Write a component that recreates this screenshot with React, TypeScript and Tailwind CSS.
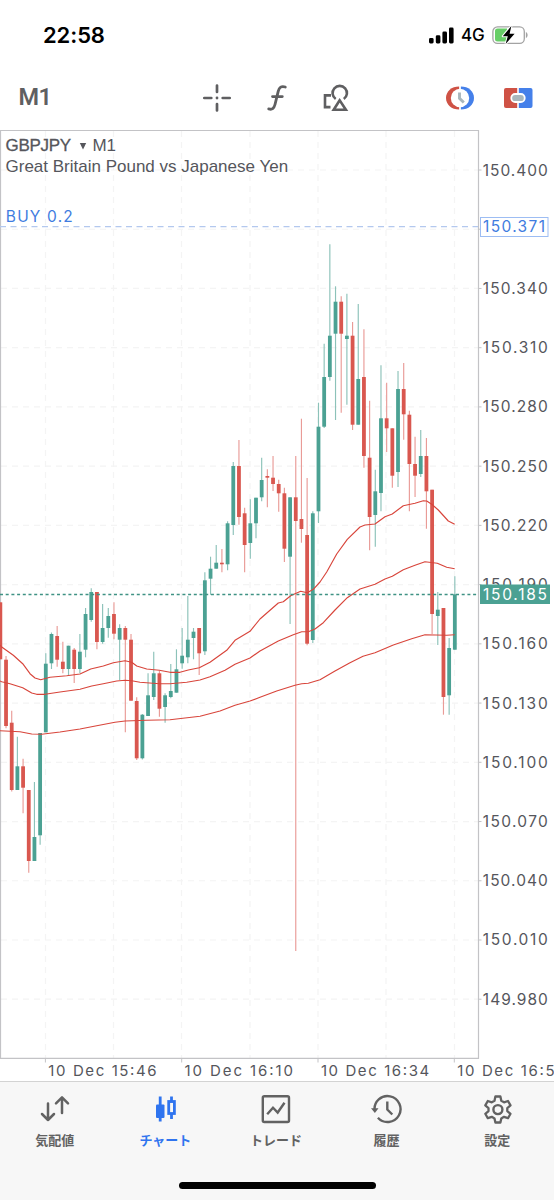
import type { ReactNode } from 'react';

// high, body top, body bottom, low (chart units), direction
type Candle = [number, number, number, number, 'u' | 'd'];

const CANDLES: Candle[] = [
  [602.3, 602.3, 659.3, 659.3, 'd'],
  [656, 659.7, 726, 728.3, 'd'],
  [710.7, 722.7, 790, 791.5, 'd'],
  [736.7, 766.3, 790, 790, 'u'],
  [758.7, 766.3, 787.7, 813.3, 'd'],
  [790, 790, 861, 872.7, 'd'],
  [782, 837, 861, 861, 'u'],
  [733, 733, 835.3, 844.7, 'u'],
  [653.3, 663.7, 732.3, 732.3, 'u'],
  [632.5, 634, 663.3, 669, 'u'],
  [626, 636, 659.7, 666.7, 'd'],
  [641.7, 661.7, 669, 673.3, 'd'],
  [645.7, 645.7, 669, 676, 'u'],
  [648, 649.7, 669, 683, 'd'],
  [634, 651.7, 669, 673.3, 'u'],
  [608, 614, 649.7, 657.3, 'u'],
  [588.3, 592, 620, 621.7, 'u'],
  [592, 592, 642, 649.3, 'd'],
  [604, 628, 642, 643.7, 'u'],
  [608, 616, 628, 637.7, 'u'],
  [602.3, 614, 633.7, 639.3, 'd'],
  [624.3, 628, 639.7, 680, 'u'],
  [626, 628, 639.7, 732.3, 'd'],
  [634, 639.7, 700.7, 700.7, 'd'],
  [697.3, 701, 758.3, 760, 'd'],
  [714, 714.7, 758.3, 759.5, 'u'],
  [673.3, 695.3, 716, 716, 'u'],
  [651.7, 673.3, 697, 700, 'u'],
  [670.7, 673.3, 708.7, 716.7, 'd'],
  [693.3, 695.3, 707, 722.7, 'u'],
  [664, 691, 697, 698.3, 'u'],
  [649.3, 669.3, 692.7, 692.7, 'u'],
  [628, 655.7, 663.3, 668.7, 'u'],
  [596, 639.7, 657.3, 663.3, 'u'],
  [628, 631.7, 638, 659.3, 'u'],
  [628, 628, 653.3, 675, 'd'],
  [572.3, 580.3, 651.3, 655, 'u'],
  [556.7, 568.7, 578.7, 594.7, 'u'],
  [545, 562.7, 568.7, 568.7, 'u'],
  [549, 562.7, 564.3, 572.3, 'd'],
  [521.3, 523.3, 564.3, 570.3, 'u'],
  [462, 466, 525, 535, 'u'],
  [440, 466, 517, 524.7, 'd'],
  [507.7, 513.3, 545, 572.3, 'd'],
  [499.3, 523.3, 543, 558.7, 'u'],
  [497.7, 497.7, 523.3, 538.3, 'u'],
  [457.7, 480, 497.3, 501.3, 'u'],
  [469.3, 476, 477.7, 507.3, 'd'],
  [456, 477.7, 484, 491, 'd'],
  [479.7, 484, 493.3, 511.7, 'd'],
  [487.7, 493.3, 548.7, 562, 'd'],
  [497.3, 497.3, 556.7, 624, 'u'],
  [456, 497.3, 521, 951, 'd'],
  [418.7, 519, 529, 542.7, 'd'],
  [478, 535, 643.7, 645.3, 'd'],
  [511.3, 513.3, 640, 643, 'u'],
  [402.7, 426.7, 511.3, 523, 'u'],
  [343.7, 377, 426.7, 428, 'u'],
  [244.3, 335.7, 377, 380.7, 'u'],
  [286.3, 301.7, 333.7, 420, 'u'],
  [296.3, 301.7, 333.7, 412.7, 'd'],
  [293.7, 335.7, 339, 404.7, 'u'],
  [322, 335.7, 424.7, 430, 'd'],
  [304, 379, 424.7, 424.7, 'u'],
  [329.3, 377, 456, 467.7, 'd'],
  [400.7, 457.7, 517, 550.3, 'd'],
  [469.7, 491.3, 515, 546.7, 'u'],
  [365.3, 418.3, 493, 511.3, 'u'],
  [382.7, 418.3, 428.3, 452, 'd'],
  [428.3, 428.3, 475.7, 487.7, 'd'],
  [371, 389, 472, 487, 'u'],
  [363, 389, 414.3, 439.7, 'd'],
  [410.7, 414.7, 464, 511.3, 'd'],
  [436.7, 464, 475.7, 497, 'd'],
  [430, 456, 474, 477, 'u'],
  [438, 456, 491.3, 528.7, 'd'],
  [489.7, 489.7, 614, 634, 'd'],
  [592, 609.7, 616, 645, 'u'],
  [608, 608, 697, 714.7, 'd'],
  [638, 648, 695.3, 714.7, 'u'],
  [576.3, 594.3, 649.7, 649.7, 'u'],
];

const AVERAGES = [
  '0,645 1.7,647 13.3,655.3 22.7,663.7 30,673.7 35,678 40.7,679.7 50,677.3 66.7,675.7 80,674 90.7,669 103.3,666 113.3,662.7 125,660.7 131.7,662.3 136.7,666 146.7,669 159.3,670.3 170,672.3 180,672.3 188.3,670 199.3,667.7 210,662.3 226.7,650.3 235,640.3 250,631.3 260,619 278.3,603 283.3,601.7 290.7,595.7 295,593.7 300.7,591.3 307.3,592.7 313.3,589.3 320,582 326.7,572 336.7,554 347.3,539.3 360,527 365,525 375,524 385,516.7 392.3,514 403.3,505.7 415,503.3 423.3,500.7 426.7,501 431.7,504.3 438.3,510 448.3,521 454.7,524.3',
  '0,681 1.7,681.7 10,683.7 22.7,687.7 31.7,693 36.7,694.3 45,694.3 60,692 80,689.3 91.7,686 103.3,683.7 116.7,681 125,680.3 131.7,680.7 140,682.3 159.3,683.7 170,683.7 186.7,682.3 200,680 210,676.7 225,670.3 235,664.3 250,658 260,651 278.3,641 293.3,634.7 301.7,631.7 308.3,631.7 315,629 323.3,622.7 335,610 347.3,597.7 360,589 364,587.7 375,584.3 385,579 392.3,576.3 403.3,569.7 415,565.3 425,561.7 437.3,563.3 446.7,567.3 454.7,568.7',
  '0,730.7 20,731.7 31.7,734 41.7,734.3 60,732 80,729 96.7,725.7 115,722.3 125,721 146.7,720.3 170,719.7 200,716.3 220,711 235,705.3 250,701 260,697.3 276.7,691 295,685.3 301.7,683.7 308.3,683.3 320,679.7 335,671 350,662.7 363,656.3 375,652.7 393.3,645 411.7,638.7 425,634.7 446.7,635.3 454.7,634.7',
];

const PRICES = [
  '150.400', '150.370', '150.340', '150.310', '150.280', '150.250', '150.220', '150.190',
  '150.160', '150.130', '150.100', '150.070', '150.040', '150.010', '149.980',
];

const TIMES = ['10 Dec 15:46', '10 Dec 16:10', '10 Dec 16:34', '10 Dec 16:58'];

const GRID_X = [45.5, 113.5, 181.5, 250, 318, 386, 454.5];

const priceY = (i: number) => 170 + i * 59.23;

function Chart() {
  return (
    <svg
      width="554"
      height="951"
      viewBox="0 130 554 951"
      className="block font-[Inter,'Noto_Sans',sans-serif]"
    >
      <g stroke="#f4f4f4" strokeWidth="1.2" strokeDasharray="6 5">
        {GRID_X.map((x) => (
          <line key={x} x1={x} x2={x} y1="131" y2="1058" />
        ))}
        {PRICES.map((p, i) => (
          <line key={p} x1="1" x2="478" y1={priceY(i)} y2={priceY(i)} />
        ))}
      </g>

      {/* frame and ticks */}
      <path d="M0.5 1058V130.3H478.5V1058.3H0" fill="none" stroke="#c3c3c6" strokeWidth="1.2" />
      <g stroke="#c3c3c6">
        {PRICES.map((p, i) => (
          <line key={p} x1="478" x2="481.5" y1={priceY(i)} y2={priceY(i)} />
        ))}
        {TIMES.map((t, i) => (
          <line key={t} x1={45.4 + i * 136.3} x2={45.4 + i * 136.3} y1="1058" y2="1062.5" />
        ))}
      </g>

      {/* open position */}
      <line x1="0" x2="478" y1="226.7" y2="226.7" stroke="#b3c8ee" strokeWidth="1.2" strokeDasharray="6 4.5" />
      <text x="5.8" y="222.4" fontSize="15.5" textLength="67" fill="#3f7ce0">BUY 0.2</text>

      {CANDLES.map(([high, top, bottom, low, dir], i) => {
        const x = 0.35 + i * 5.681;
        const up = dir === 'u';
        return (
          <g key={i}>
            <line x1={x} x2={x} y1={high} y2={low} stroke={up ? '#8cc2b9' : '#e99b97'} strokeWidth="1.15" />
            <rect x={x - 1.9} y={top} width="3.8" height={bottom - top} fill={up ? '#4ba193' : '#d9574f'} />
          </g>
        );
      })}

      {AVERAGES.map((points) => (
        <polyline key={points} points={points} fill="none" stroke="#d8453b" strokeWidth="1.15" strokeLinejoin="round" />
      ))}

      {/* bid line */}
      <line x1="0" x2="478" y1="594.4" y2="594.4" stroke="#3f9284" strokeWidth="1.5" strokeDasharray="3 2.7" />

      <g fontSize="15.5" fill="#55565c">
        {PRICES.map((p, i) =>
          p === '150.370' ? null : (
            <text key={p} x="482.8" y={priceY(i) + 5.5} textLength="65">
              {p}
            </text>
          ),
        )}
        {TIMES.map((t, i) => (
          <text key={t} x={48.3 + i * 136.3} y="1075.7" fontSize="15" textLength="108.3">
            {t}
          </text>
        ))}
      </g>

      <rect x="480.5" y="217.5" width="67.5" height="19" fill="#fff" stroke="#9dbdf3" />
      <text x="483" y="232.3" fontSize="15.5" textLength="62" fill="#3f7ce0">150.371</text>
      <rect x="480" y="584.5" width="70" height="19.5" fill="#4ba193" />
      <text x="483" y="599.8" fontSize="15.5" textLength="64" fill="#fff">150.185</text>
    </svg>
  );
}

function StatusBar() {
  return (
    <div className="flex h-[70px] items-center pl-[43px] pr-[26px] font-[Inter,sans-serif] text-black">
      <span className="text-[22px] font-semibold leading-none tracking-[-0.1px]">22:58</span>
      <svg width="25" height="17" viewBox="0 0 25 17" className="ml-auto">
        <rect x="0" y="11" width="4.6" height="5.5" rx="1.4" />
        <rect x="6.8" y="8.300" width="4.6" height="8.2" rx="1.4" />
        <rect x="13.4" y="4.600" width="4.6" height="11.9" rx="1.4" />
        <rect x="20" y="0.500" width="4.6" height="16" rx="1.4" />
      </svg>
      <span className="ml-[7px] w-[25px] text-[17px] font-medium leading-none tracking-[-0.2px]">4G</span>
      <svg width="36" height="20" viewBox="0 0 36 20" className="ml-[6px]">
        <rect x="0.9" y="1.9" width="31.4" height="16.4" rx="4.6" fill="#fff" stroke="#a3a3a3" strokeWidth="1.3" />
        <path d="M5.500 3.500H15v13H5.500a2.500 2.500 0 0 1-2.500-2.500V6a2.500 2.500 0 0 1 2.500-2.500z" fill="#67ce67" />
        <path d="M33.900 7v6.200c2.300-1 2.300-5.200 0-6.200z" fill="#a3a3a3" />
        <path
          d="M19.400 1 10.800 11.200h5L13.600 19l9-10.300h-5z"
          stroke="#fff"
          strokeWidth="2"
          paintOrder="stroke"
          strokeLinejoin="round"
        />
      </svg>
    </div>
  );
}

function Toolbar() {
  return (
    <div className="flex h-[60px] items-center pb-1 pl-[18.500px] pr-[20px] text-[#5f5f61]">
      <span className="w-[182.500px] font-[Roboto,sans-serif] text-[23.500px] font-semibold leading-none tracking-[-0.600px]">
        M1
      </span>
      <svg width="32" height="32" viewBox="0 0 32 32" fill="none" stroke="currentColor" strokeWidth="2.7" strokeLinecap="round">
        <path d="M16 3.500v6.500M16 22v6.500M3.300 16h7M21.700 16h7" />
        <circle cx="16" cy="16" r="1.4" fill="currentColor" stroke="none" />
      </svg>
      <svg width="32" height="32" viewBox="0 0 32 32" fill="none" stroke="currentColor" strokeWidth="2.800" strokeLinecap="round" className="ml-[27.500px]">
        <path d="M24.300 5c-3.900-1.200-6.100.2-7.100 4.300L14 22.500c-1.100 4.200-2.900 5.500-6.300 4.400M11.500 14.600h9.800" />
      </svg>
      <svg width="32" height="32" viewBox="0 0 32 32" fill="none" stroke="currentColor" strokeWidth="2.600" className="ml-[27px]">
        <path d="M11 13.400H5V25.100h5.500" />
        <path d="M15.700 17a7.200 7.200 0 1 1 8.100 0" />
        <path d="M19.700 18.300 13.700 27.700h12.200z" />
      </svg>
      <svg width="32" height="32" viewBox="0 0 32 32" className="ml-auto">
        <path d="M15.100 4.500C7.500 4.500 2 9.300 2 16s5.500 11.500 13.100 11.500z" fill="#cf5245" />
        <path d="M16.900 4.500C24.500 4.500 30 9.300 30 16s-5.500 11.500-13.100 11.500z" fill="#4580ea" />
        <circle cx="16" cy="16" r="9.200" fill="#fff" />
        <path d="M15.500 10.500v5.800l4.300 4.200" fill="none" stroke="#a9b7bd" strokeWidth="2.900" />
      </svg>
      <svg width="32" height="32" viewBox="0 0 32 32" className="ml-[26px]">
        <path d="M4 6h11.200v20H4A2 2 0 0 1 2 24V8a2 2 0 0 1 2-2z" fill="#cf5245" />
        <path d="M16.800 6H28.500a2 2 0 0 1 2 2v16a2 2 0 0 1-2 2H16.800z" fill="#4580ea" />
        <rect x="9.300" y="12" width="13.400" height="8" rx="3.800" fill="#a9b7bd" stroke="#fff" strokeWidth="1.800" />
      </svg>
    </div>
  );
}

function Tab({ label, active, children }: { label: string; active?: boolean; children: ReactNode }) {
  return (
    <div className={`flex flex-1 flex-col items-center pt-[11px] ${active ? 'text-[#2f74ef]' : 'text-[#626262]'}`}>
      <svg width="32" height="32" viewBox="0 0 32 32" fill="none" stroke="currentColor" strokeWidth="2.400">
        {children}
      </svg>
      <span className="mt-[6px] whitespace-nowrap pr-px font-['Noto_Sans_CJK_JP',sans-serif] text-[13px] font-bold leading-[18px]">
        {label}
      </span>
    </div>
  );
}

function TabBar() {
  return (
    <div className="flex h-[119px] flex-col border-t border-[#d3d3d3] bg-[#f7f7f7]">
      <div className="flex h-[100px] pr-px">
        <Tab label="気配値">
          <g strokeLinecap="round" strokeLinejoin="round" strokeWidth="2.500">
            <path d="M9 10.500V27M3 21l6 6 6-6" />
            <path d="M23 20V4.500M17 10.300l6-6 6 6" />
          </g>
        </Tab>
        <Tab label="チャート" active>
          <path d="M10.200 3.500v9M10.200 24v4.500" strokeWidth="2.800" />
          <rect x="6" y="11.500" width="8.500" height="13.500" rx="1" fill="currentColor" stroke="none" />
          <path d="M21.500 3.500v6M21.500 20v6" strokeWidth="2.800" />
          <rect x="18.700" y="8.500" width="5.700" height="12" strokeWidth="2.800" />
        </Tab>
        <Tab label="トレード">
          <rect x="2.800" y="3.300" width="26.200" height="25.700" rx="1.500" />
          <path d="m7.200 21.300 5.800-6.600 4.700 4.800 6.800-9.800" />
        </Tab>
        <Tab label="履歴">
          <path d="M3.600 17.500A13 13 0 1 1 6.900 24.800" />
          <path d="M0 15.200h7.500l-3.600 4.800z" fill="currentColor" stroke="none" />
          <path d="M16.300 8.500v8l5 5" />
        </Tab>
        <Tab label="設定">
          <path
            d="M13.400 3.500h5l.9 4.300 2.700 1.500 4-1.300 2.500 4.300-3.200 2.800v3l3.200 2.700-2.500 4.400-4-1.400-2.700 1.600-.9 4.100h-5l-.9-4.100-2.700-1.600-4 1.400-2.500-4.400 3.200-2.700v-3l-3.200-2.800 2.500-4.300 4 1.300 2.700-1.500z"
            strokeWidth="2.300"
            strokeLinejoin="round"
          />
          <circle cx="15.900" cy="16.600" r="4.500" />
        </Tab>
      </div>
      <div className="mx-auto h-[7px] w-[197px] shrink-0 rounded-full bg-black" />
    </div>
  );
}

export default function App() {
  return (
    <div className="flex h-[1200px] w-[554px] flex-col overflow-hidden bg-white">
      <StatusBar />
      <Toolbar />
      <div className="relative h-[951px]">
        <Chart />
        {/* symbol title over the plot */}
        <div className="absolute left-[5.500px] top-[5px] font-['Liberation_Sans',sans-serif] text-[17px] leading-[21px] text-[#55565c]">
          <div className="flex items-center">
            <span className="w-[68px] tracking-[-0.3px] [-webkit-text-stroke:0.3px_#55565c]">GBPJPY</span>
            <svg width="8" height="8" viewBox="0 0 8 8" className="ml-[5px] mr-[6px]" fill="currentColor">
              <path d="M0.800 1h6.400L4 7.500z" />
            </svg>
            <span className="tracking-[-0.2px]">M1</span>
          </div>
          <div className="whitespace-nowrap">Great Britain Pound vs Japanese Yen</div>
        </div>
      </div>
      <TabBar />
    </div>
  );
}
